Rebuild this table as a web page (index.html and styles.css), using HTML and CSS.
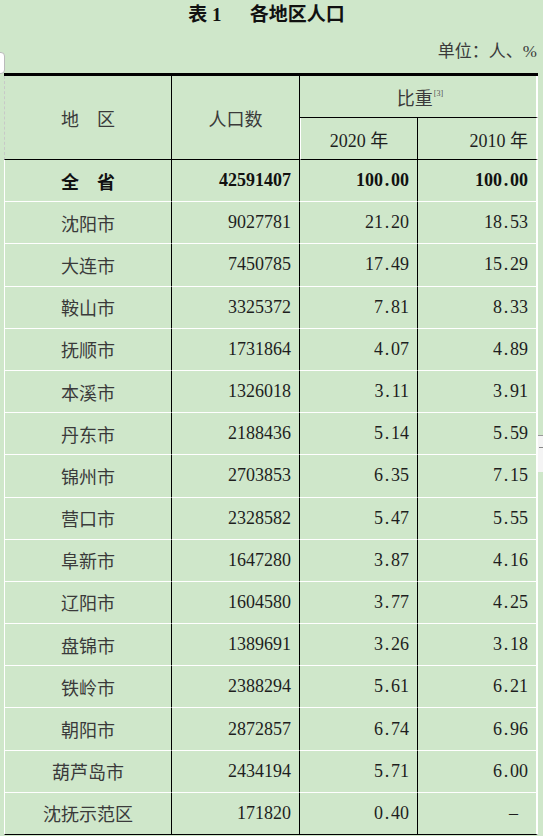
FILE: index.html
```html
<!DOCTYPE html>
<html lang="zh-CN">
<head>
<meta charset="utf-8">
<title>表1 各地区人口</title>
<link rel="stylesheet" href="styles.css">
</head>
<body>
<div class="page">
  <h1 class="title"><span class="tno">表 1</span><span>各地区人口</span></h1>
  <div class="unit">单位：人、%</div>
  <table class="pop">
    <colgroup>
      <col class="c1"><col class="c2"><col class="c3"><col class="c4">
    </colgroup>
    <thead>
      <tr>
        <th rowspan="2" class="h-region">地　区</th>
        <th rowspan="2" class="h-pop">人口数</th>
        <th colspan="2" class="h-share">比重<sup>[3]</sup></th>
      </tr>
      <tr>
        <th class="h-year">2020 年</th>
        <th class="h-year last">2010 年</th>
      </tr>
    </thead>
    <tbody>
      <tr class="total"><td>全　省</td><td>42591407</td><td>100<span class="pt">.</span>00</td><td class="last">100<span class="pt">.</span>00</td></tr>
      <tr><td>沈阳市</td><td>9027781</td><td>21<span class="pt">.</span>20</td><td class="last">18<span class="pt">.</span>53</td></tr>
      <tr><td>大连市</td><td>7450785</td><td>17<span class="pt">.</span>49</td><td class="last">15<span class="pt">.</span>29</td></tr>
      <tr><td>鞍山市</td><td>3325372</td><td>7<span class="pt">.</span>81</td><td class="last">8<span class="pt">.</span>33</td></tr>
      <tr><td>抚顺市</td><td>1731864</td><td>4<span class="pt">.</span>07</td><td class="last">4<span class="pt">.</span>89</td></tr>
      <tr><td>本溪市</td><td>1326018</td><td>3<span class="pt">.</span>11</td><td class="last">3<span class="pt">.</span>91</td></tr>
      <tr><td>丹东市</td><td>2188436</td><td>5<span class="pt">.</span>14</td><td class="last">5<span class="pt">.</span>59</td></tr>
      <tr><td>锦州市</td><td>2703853</td><td>6<span class="pt">.</span>35</td><td class="last">7<span class="pt">.</span>15</td></tr>
      <tr><td>营口市</td><td>2328582</td><td>5<span class="pt">.</span>47</td><td class="last">5<span class="pt">.</span>55</td></tr>
      <tr><td>阜新市</td><td>1647280</td><td>3<span class="pt">.</span>87</td><td class="last">4<span class="pt">.</span>16</td></tr>
      <tr><td>辽阳市</td><td>1604580</td><td>3<span class="pt">.</span>77</td><td class="last">4<span class="pt">.</span>25</td></tr>
      <tr><td>盘锦市</td><td>1389691</td><td>3<span class="pt">.</span>26</td><td class="last">3<span class="pt">.</span>18</td></tr>
      <tr><td>铁岭市</td><td>2388294</td><td>5<span class="pt">.</span>61</td><td class="last">6<span class="pt">.</span>21</td></tr>
      <tr><td>朝阳市</td><td>2872857</td><td>6<span class="pt">.</span>74</td><td class="last">6<span class="pt">.</span>96</td></tr>
      <tr><td>葫芦岛市</td><td>2434194</td><td>5<span class="pt">.</span>71</td><td class="last">6<span class="pt">.</span>00</td></tr>
      <tr class="end"><td>沈抚示范区</td><td>171820</td><td>0<span class="pt">.</span>40</td><td class="last"><span class="dash">–</span></td></tr>
    </tbody>
  </table>
  <div class="tab-left"></div>
  <div class="tab-right"><span></span></div>
</div>
</body>
</html>
```
FILE: styles.css
```css
html, body {
  margin: 0;
  padding: 0;
  background: #cfe7ca;
}
body {
  font-family: "Liberation Serif", "Noto Sans CJK SC", serif;
  color: #1e1e1e;
  width: 543px;
  height: 836px;
  overflow: hidden;
}
.page {
  position: relative;
  padding-left: 4px;
  height: 836px;
}
.title {
  margin: 0;
  height: 30px;
  line-height: 30px;
  font-size: 19px;
  font-weight: bold;
  text-align: center;
  color: #111;
  padding-right: 14px;
}
.tno {
  margin-right: 28px;
}
.unit {
  height: 43px;
  line-height: 44px;
  font-size: 17px;
  text-align: right;
  padding-right: 6px;
  color: #3a3a3a;
}
.pop {
  border-collapse: separate;
  border-spacing: 0;
  table-layout: fixed;
  width: 534px;
  border-top: 3px solid #000;
  font-size: 18px;
}
.c1 { width: 168px; }
.c2 { width: 128px; }
.c3 { width: 118px; }
.c4 { width: 120px; }
.pop th, .pop td {
  padding: 0 8px 0 0;
  border-right: 1px solid #000;
  border-bottom: 1px solid #fff;
  text-align: right;
  font-weight: normal;
  white-space: nowrap;
  vertical-align: middle;
}
.pop th:first-child, .pop td:first-child {
  border-left: 1px solid #fff;
  text-align: center;
  padding: 0;
  color: #3a3a3a;
}
.pop thead th {
  border-bottom-color: #000;
  color: #3a3a3a;
}
.pop thead th.h-region {
  border-left: 1px dashed #c8c8c8;
}
.pop thead th.h-pop {
  text-align: center;
  padding: 0;
}
.pop thead th.h-share {
  text-align: center;
  padding: 0 0 0 4px;
  height: 41px;
  border-right: 2px solid #fff;
}
.pop thead th.h-year {
  height: 41px;
  color: #1e1e1e;
}
.pop .last {
  border-right: 2px solid #fff;
}
.h-share sup {
  font-size: 8px;
  color: #555;
  vertical-align: 9px;
  margin-left: 1px;
}
.pop tbody td {
  height: 41.2px;
}
.pop tbody tr.end td {
  border-bottom-color: #000;
}
.pop tr.total td {
  font-weight: bold;
  color: #111;
}
.pt {
  display: inline-block;
  width: 0.45em;
  text-align: center;
}
.dash {
  display: inline-block;
  margin-right: 10px;
}
.tab-left {
  position: absolute;
  left: -4px;
  top: 52px;
  width: 7px;
  height: 20px;
  background: #fff;
  border: 1px solid #bbb;
  border-radius: 0 4px 4px 0;
}
.tab-right {
  position: absolute;
  left: 538px;
  top: 435px;
  width: 8px;
  height: 36px;
  background: #f4f4f4;
  border-top: 1px solid #999;
}
.tab-right span {
  position: absolute;
  left: 1px;
  top: 11px;
  width: 4px;
  height: 1px;
  background: #888;
}
```
